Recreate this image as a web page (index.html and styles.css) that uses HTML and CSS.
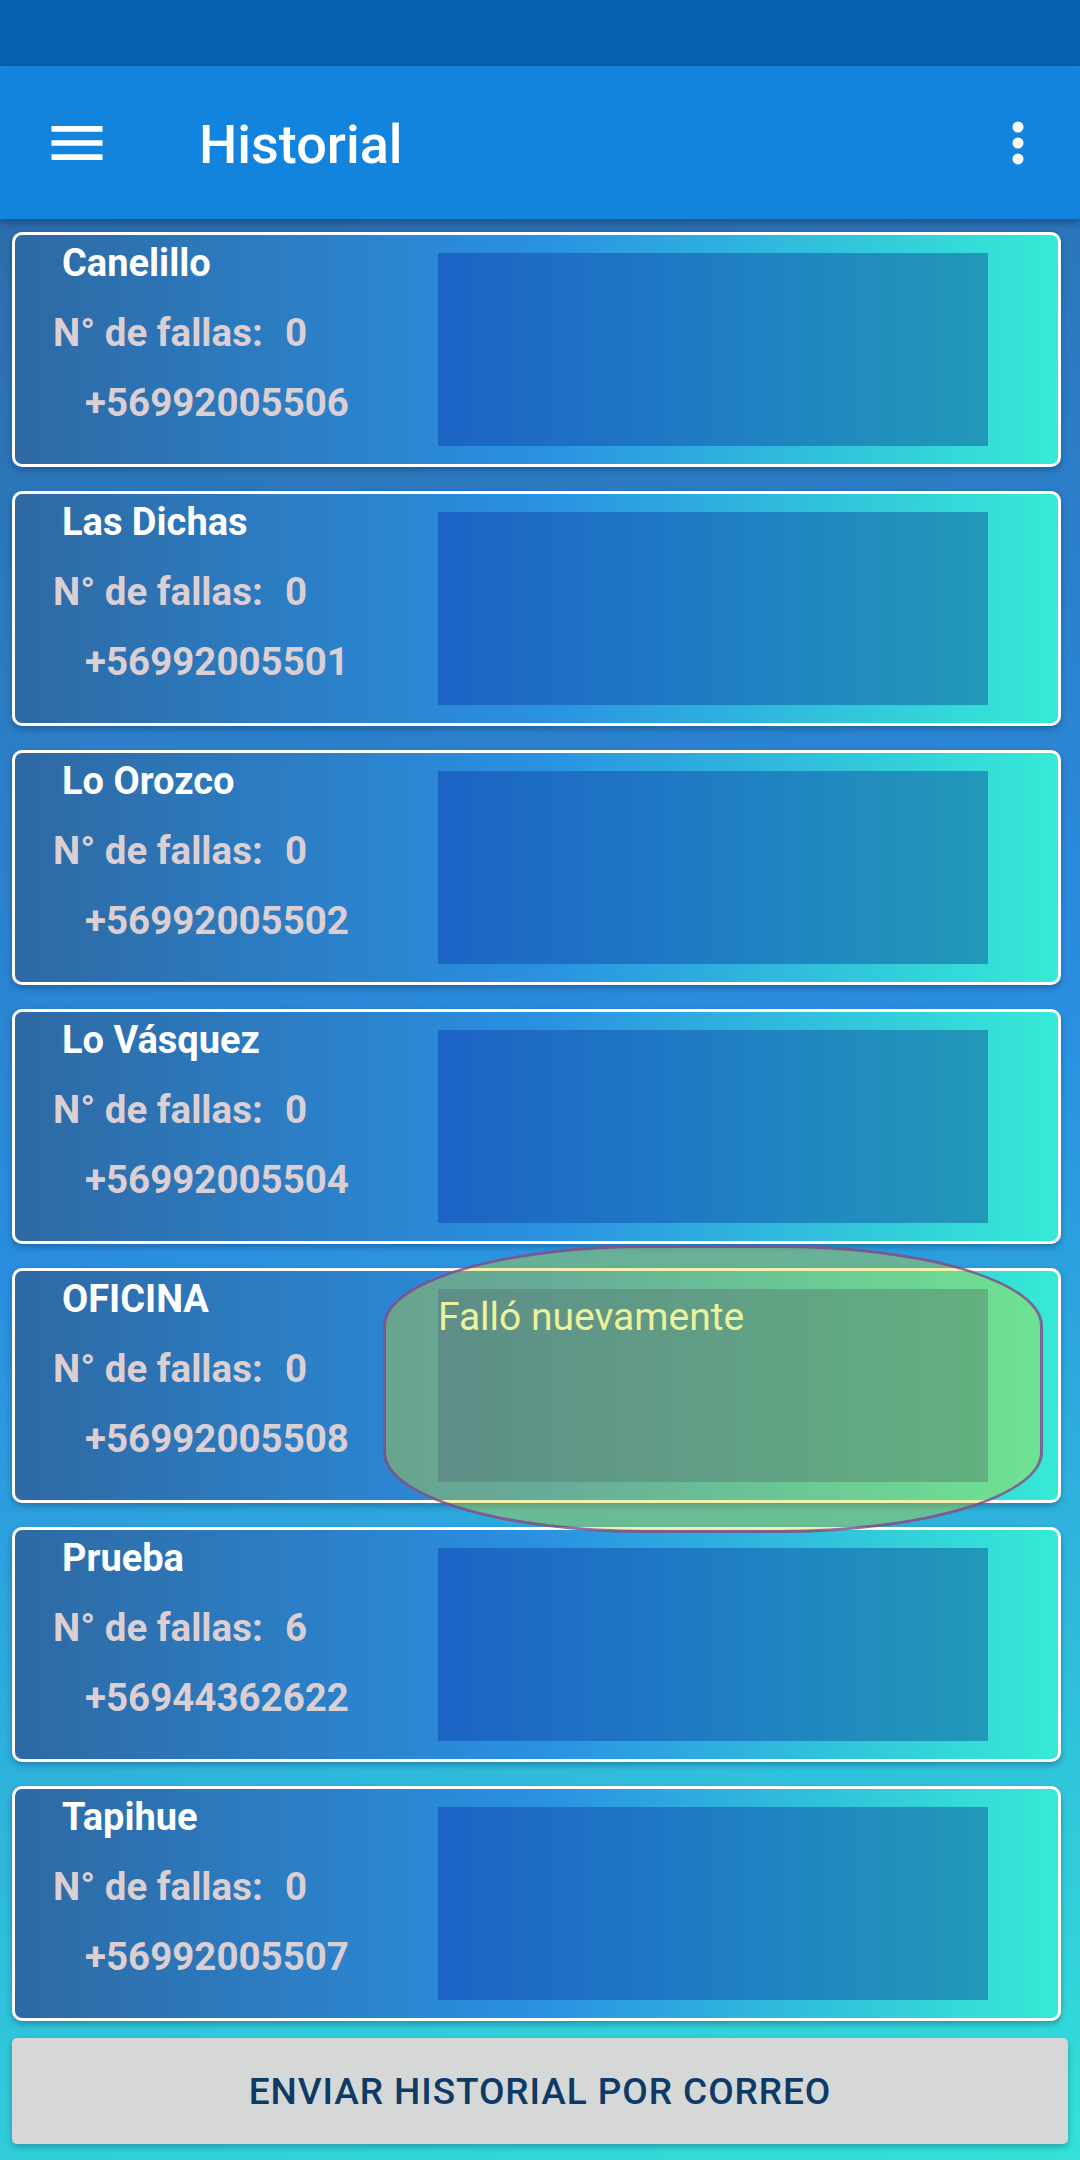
FILE: index.html
```html
<!DOCTYPE html>
<html lang="es">
<head>
<meta charset="utf-8">
<title>Historial</title>
<link rel="stylesheet" href="styles.css">
</head>
<body>
<div class="screen">
  <div class="status-bar"></div>
  <header class="toolbar">
    <svg class="menu-icon" viewBox="0 0 24 24" width="68" height="68"><path fill="#fff" d="M3 18h18v-2H3v2zm0-5h18v-2H3v2zm0-7v2h18V6H3z"/></svg>
    <h1 class="title">Historial</h1>
    <svg class="more-icon" viewBox="0 0 24 24" width="66" height="66"><circle cx="12" cy="6.2" r="2" fill="#fff"/><circle cx="12" cy="12" r="2" fill="#fff"/><circle cx="12" cy="17.8" r="2" fill="#fff"/></svg>
  </header>
  <main class="content">
    <div class="card">
      <div class="info">
        <div class="name">Canelillo</div>
        <div class="fails"><span class="fails-label">N° de fallas:</span><span>0</span></div>
        <div class="phone">+56992005506</div>
      </div>
      <div class="panel"></div>
    </div>
    <div class="card">
      <div class="info">
        <div class="name">Las Dichas</div>
        <div class="fails"><span class="fails-label">N° de fallas:</span><span>0</span></div>
        <div class="phone">+56992005501</div>
      </div>
      <div class="panel"></div>
    </div>
    <div class="card">
      <div class="info">
        <div class="name">Lo Orozco</div>
        <div class="fails"><span class="fails-label">N° de fallas:</span><span>0</span></div>
        <div class="phone">+56992005502</div>
      </div>
      <div class="panel"></div>
    </div>
    <div class="card">
      <div class="info">
        <div class="name">Lo Vásquez</div>
        <div class="fails"><span class="fails-label">N° de fallas:</span><span>0</span></div>
        <div class="phone">+56992005504</div>
      </div>
      <div class="panel"></div>
    </div>
    <div class="card">
      <div class="info">
        <div class="name">OFICINA</div>
        <div class="fails"><span class="fails-label">N° de fallas:</span><span>0</span></div>
        <div class="phone">+56992005508</div>
      </div>
      <div class="panel"></div>
    </div>
    <div class="card">
      <div class="info">
        <div class="name">Prueba</div>
        <div class="fails"><span class="fails-label">N° de fallas:</span><span>6</span></div>
        <div class="phone">+56944362622</div>
      </div>
      <div class="panel"></div>
    </div>
    <div class="card">
      <div class="info">
        <div class="name">Tapihue</div>
        <div class="fails"><span class="fails-label">N° de fallas:</span><span>0</span></div>
        <div class="phone">+56992005507</div>
      </div>
      <div class="panel"></div>
    </div>
    <button class="send-btn">ENVIAR HISTORIAL POR CORREO</button>
  </main>
  <div class="toast"><span class="toast-text">Falló nuevamente</span></div>
</div>
</body>
</html>
```
FILE: styles.css
```css
* { box-sizing: border-box; }
html, body { margin: 0; padding: 0; }
body {
  width: 1080px;
  height: 2160px;
  overflow: hidden;
  font-family: Roboto, "Noto Sans", "Liberation Sans", sans-serif;
}
.screen {
  position: relative;
  width: 1080px;
  height: 2160px;
  display: flex;
  flex-direction: column;
  background: linear-gradient(165deg, #2d67a1 0%, #2a8de0 52%, #33e2d8 100%);
}
.status-bar {
  height: 66px;
  background: #0562ae;
  flex: none;
}
.toolbar {
  position: relative;
  z-index: 2;
  height: 153px;
  flex: none;
  background: #1284dd;
  display: flex;
  align-items: center;
  padding-left: 43px;
  padding-right: 29px;
  box-shadow: 0 4px 8px rgba(10, 40, 80, 0.45);
}
.menu-icon { flex: none; }
.title {
  margin: 0 0 0 88px;
  flex: 1;
  color: #fff;
  font-size: 54px;
  font-weight: 500;
  line-height: 64px;
  padding-top: 4px;
}
.more-icon { flex: none; }
.content {
  flex: 1;
  padding: 13px 12px 0 12px;
  display: flex;
  flex-direction: column;
  gap: 24px;
}
.card {
  height: 235px;
  margin-right: 7px;
  border: 3px solid #fff;
  border-radius: 10px;
  display: flex;
  background: linear-gradient(90deg, #2e69a3 0%, #2a90e2 50%, #36ead6 100%);
  box-shadow: 0 3px 6px rgba(10, 40, 80, 0.35);
}
.info {
  width: 423px;
  flex: none;
  padding-top: 6px;
  font-weight: 700;
}
.name {
  color: #fff;
  font-size: 38px;
  line-height: 44px;
  padding-left: 47px;
}
.fails {
  color: #dccfd3;
  font-size: 38.5px;
  line-height: 44px;
  margin-top: 26px;
  padding-left: 38px;
}
.fails-label {
  display: inline-block;
  width: 232px;
}
.phone {
  color: #dccfd3;
  font-size: 38.5px;
  line-height: 44px;
  margin-top: 26px;
  padding-left: 70px;
}
.panel {
  flex: none;
  width: 550px;
  margin: 18px 0 18px 0;
  background: linear-gradient(90deg, #1c63c5 0%, #1f7ac4 45%, #2299b9 100%);
}
.send-btn {
  margin-top: -7px;
  height: 106px;
  border: none;
  border-radius: 5px;
  background: #d6d8d8;
  color: #0e3a66;
  font-family: Roboto, "Noto Sans", sans-serif;
  font-size: 37px;
  font-weight: 500;
  letter-spacing: 0.025em;
  box-shadow: 0 3px 6px rgba(10, 60, 80, 0.35);
}
.toast {
  position: absolute;
  left: 383px;
  top: 1245px;
  width: 660px;
  height: 288px;
  border: 3px solid rgba(125, 60, 145, 0.75);
  border-radius: 40% / 28%;
  background: rgba(213, 220, 26, 0.36);
  z-index: 3;
  padding: 47px 0 0 52px;
}
.toast-text {
  display: block;
  color: #eef29a;
  font-size: 39px;
  line-height: 44px;
}
```
